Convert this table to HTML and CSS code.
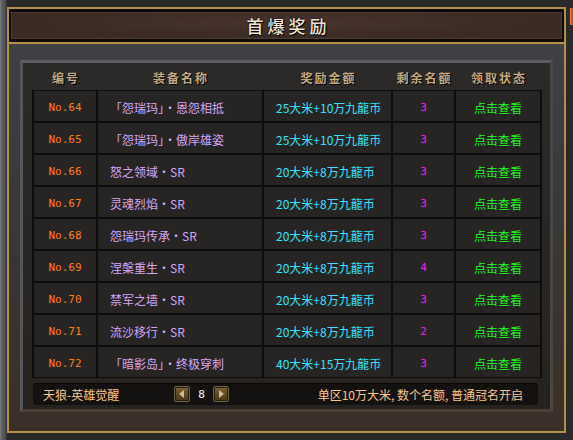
FILE: index.html
```html
<!DOCTYPE html>
<html lang="zh-CN">
<head>
<meta charset="utf-8">
<title>首爆奖励</title>
<link rel="stylesheet" href="styles.css">
</head>
<body>
<div class="frame">
  <span class="corner-tab"></span>
  <div class="dialog">
    <div class="title-wrap">
      <div class="title-bar"><h1 class="title">首爆奖励</h1></div>
    </div>
    <div class="content">
      <div class="panel">
        <div class="thead">
          <span>编号</span><span>装备名称</span><span>奖励金额</span><span>剩余名额</span><span>领取状态</span>
        </div>
        <div class="table">
          <div class="row"><span class="c-no">No.64</span><span class="c-name">「怨瑞玛」·恩怨相抵</span><span class="c-prize">25大米+10万九龍币</span><span class="c-left">3</span><span class="c-state">点击查看</span></div>
          <div class="row"><span class="c-no">No.65</span><span class="c-name">「怨瑞玛」·傲岸雄姿</span><span class="c-prize">25大米+10万九龍币</span><span class="c-left">3</span><span class="c-state">点击查看</span></div>
          <div class="row"><span class="c-no">No.66</span><span class="c-name">怒之领域·SR</span><span class="c-prize">20大米+8万九龍币</span><span class="c-left">3</span><span class="c-state">点击查看</span></div>
          <div class="row"><span class="c-no">No.67</span><span class="c-name">灵魂烈焰·SR</span><span class="c-prize">20大米+8万九龍币</span><span class="c-left">3</span><span class="c-state">点击查看</span></div>
          <div class="row"><span class="c-no">No.68</span><span class="c-name">怨瑞玛传承·SR</span><span class="c-prize">20大米+8万九龍币</span><span class="c-left">3</span><span class="c-state">点击查看</span></div>
          <div class="row"><span class="c-no">No.69</span><span class="c-name">涅槃重生·SR</span><span class="c-prize">20大米+8万九龍币</span><span class="c-left">4</span><span class="c-state">点击查看</span></div>
          <div class="row"><span class="c-no">No.70</span><span class="c-name">禁军之墙·SR</span><span class="c-prize">20大米+8万九龍币</span><span class="c-left">3</span><span class="c-state">点击查看</span></div>
          <div class="row"><span class="c-no">No.71</span><span class="c-name">流沙移行·SR</span><span class="c-prize">20大米+8万九龍币</span><span class="c-left">2</span><span class="c-state">点击查看</span></div>
          <div class="row"><span class="c-no">No.72</span><span class="c-name">「暗影岛」·终极穿刺</span><span class="c-prize">40大米+15万九龍币</span><span class="c-left">3</span><span class="c-state">点击查看</span></div>
        </div>
        <div class="footer">
          <span class="server">天狼-英雄觉醒</span>
          <div class="pager">
            <button class="pg-btn" type="button" aria-label="上一页"><svg width="6" height="8" viewBox="0 0 6 8"><path d="M5 0 L0 4 L5 8 Z" fill="#cdbf95"/></svg></button>
            <span class="pg-num">8</span>
            <button class="pg-btn" type="button" aria-label="下一页"><svg width="6" height="8" viewBox="0 0 6 8"><path d="M1 0 L6 4 L1 8 Z" fill="#cdbf95"/></svg></button>
          </div>
          <span class="note">单区10万大米, 数个名额, 普通冠名开启</span>
        </div>
      </div>
    </div>
  </div>
</div>
</body>
</html>
```

FILE: styles.css
```css
* { box-sizing: border-box; }

html, body {
  margin: 0;
  padding: 0;
  background: #5d5e60;
}

body {
  font-family: "Noto Sans CJK SC", "Noto Sans", sans-serif;
  font-size: 12px;
}

.frame {
  position: relative;
  width: 573px;
  height: 440px;
  padding: 7px;
  background: linear-gradient(90deg, #7c7d80 0, #5a5b5e 2px, #515255 5px, #2a2a2b 7px);
}

.corner-tab {
  position: absolute;
  left: 570px;
  top: 8px;
  width: 4px;
  height: 17px;
  background: #c9501d;
  border-left: 1px solid #e88a4a;
}

.dialog {
  width: 559px;
  height: 426px;
  border: 2px solid #b68f47;
  display: flex;
  flex-direction: column;
  background: #1a1817;
}

.title-wrap {
  padding: 1px 0 1px;
  border-bottom: 2px solid #b68f47;
  background: #141211;
}

.title-bar {
  height: 31px;
  border: 2px solid #0a0908;
  background:
    radial-gradient(ellipse at 50% 40%, rgba(96, 72, 60, 0.35), rgba(0, 0, 0, 0) 70%),
    #3a2a24;
  box-shadow: inset 0 0 0 1px #4e3a31;
}

.title {
  margin: 0;
  padding-left: 4px;
  font-size: 17px;
  font-weight: 500;
  line-height: 27px;
  letter-spacing: 4px;
  text-align: center;
  color: #eee4d2;
  text-shadow: 1px 1px 1px #000, 0 0 2px #000;
}

.content {
  flex: 1;
  padding: 16px 11px 19px 11px;
  background: linear-gradient(180deg, #3f4145 0, #38383a 45%, #3a322c 80%, #3b3029 100%);
}

.panel {
  height: 352px;
  border: 3px solid;
  border-color: #5c5d60 #4a4642 #4a3e35 #56575a;
  background: linear-gradient(180deg, #2b2a29 0, #282624 60%, #26221f 100%);
  padding: 0 8px 4px 9px;
  display: flex;
  flex-direction: column;
}

.thead {
  display: grid;
  grid-template-columns: 62px 164px 127px 61px 84px;
  column-gap: 2px;
  padding: 2px 2px 0;
  height: 27px;
  align-items: center;
}

.thead span {
  text-align: center;
  padding-left: 2px;
  font-size: 12px;
  font-weight: 700;
  letter-spacing: 2px;
  color: #c3a97f;
  text-shadow: 1px 1px 0 #000;
}

.table {
  display: flex;
  flex-direction: column;
  gap: 2px;
  padding: 1px 2px;
  background: #0e0d0c;
}

.row {
  display: grid;
  grid-template-columns: 62px 164px 127px 61px 84px;
  column-gap: 2px;
  height: 30px;
}

.row span {
  display: flex;
  align-items: center;
  padding-top: 2px;
  background: #272523;
  white-space: nowrap;
}

.c-no {
  justify-content: center;
  color: #ff7c14;
  font-family: "DejaVu Sans Mono", "Liberation Mono", monospace;
  font-size: 11px;
}

.c-name {
  padding-left: 12px;
  color: #d7a6f4;
}

.c-prize {
  padding-left: 12px;
  color: #33e2ff;
}

.c-left {
  justify-content: center;
  color: #ee22ee;
  font-family: "DejaVu Sans Mono", "Liberation Mono", monospace;
  font-size: 11px;
}

.c-state {
  justify-content: center;
  color: #1ef51e;
  font-size: 12px;
}

.footer {
  margin: 5px 4px 0 1px;
  height: 22px;
  border-radius: 4px;
  background: #141210;
  box-shadow: inset 0 1px 1px #0a0908;
  display: flex;
  align-items: center;
  padding: 0 15px 0 10px;
  color: #f5c78b;
}

.server {
  width: 131px;
}

.pager {
  display: flex;
  align-items: center;
}

.pg-btn {
  width: 16px;
  height: 16px;
  padding: 0;
  border: 1px solid #6b6149;
  border-radius: 2px;
  background: linear-gradient(180deg, #7f6534 0, #5e4621 60%, #4a3618 100%);
  box-shadow: inset 0 0 0 1px #2a2010;
  display: flex;
  align-items: center;
  justify-content: center;
}

.pg-num {
  width: 23px;
  text-align: center;
  color: #ffffff;
  font-family: "DejaVu Sans Mono", monospace;
  font-size: 11px;
}

.note {
  margin-left: auto;
}
```
